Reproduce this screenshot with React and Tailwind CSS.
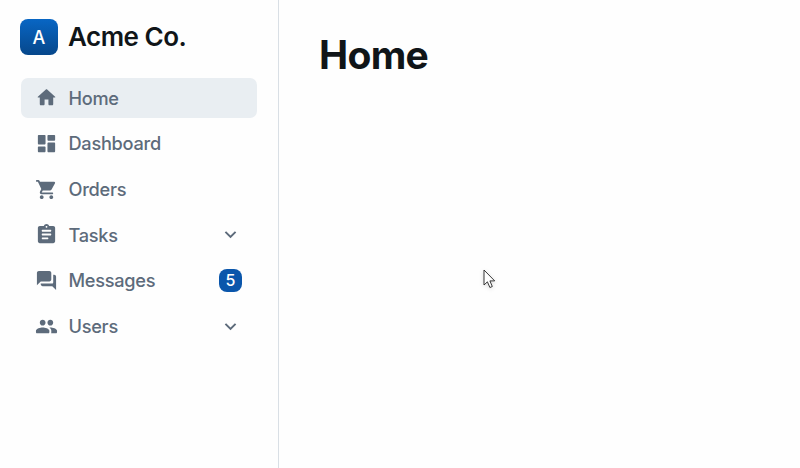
const paths = {
  home: 'M10 19v-5h4v5c0 .55.45 1 1 1h3c.55 0 1-.45 1-1v-7h1.7c.46 0 .68-.57.33-.87L12.67 3.6c-.38-.34-.96-.34-1.34 0l-8.36 7.53c-.34.3-.13.87.33.87H5v7c0 .55.45 1 1 1h3c.55 0 1-.45 1-1z',
  dashboard: 'M4 13h6c.55 0 1-.45 1-1V4c0-.55-.45-1-1-1H4c-.55 0-1 .45-1 1v8c0 .55.45 1 1 1zm0 8h6c.55 0 1-.45 1-1v-4c0-.55-.45-1-1-1H4c-.55 0-1 .45-1 1v4c0 .55.45 1 1 1zm10 0h6c.55 0 1-.45 1-1v-8c0-.55-.45-1-1-1h-6c-.55 0-1 .45-1 1v8c0 .55.45 1 1 1zM13 4v4c0 .55.45 1 1 1h6c.55 0 1-.45 1-1V4c0-.55-.45-1-1-1h-6c-.55 0-1 .45-1 1z',
  cart: 'M7 18c-1.1 0-1.99.9-1.99 2S5.9 22 7 22s2-.9 2-2-.9-2-2-2zM1 3c0 .55.45 1 1 1h1l3.6 7.59-1.35 2.44C4.52 15.37 5.48 17 7 17h11c.55 0 1-.45 1-1s-.45-1-1-1H7l1.1-2h7.45c.75 0 1.41-.41 1.75-1.03l3.58-6.49c.37-.66-.11-1.48-.87-1.48H5.21l-.67-1.43c-.16-.35-.52-.57-.9-.57H2c-.55 0-1 .45-1 1zm16 15c-1.1 0-1.99.9-1.99 2s.89 2 1.99 2 2-.9 2-2-.9-2-2-2z',
  tasks: 'M19 3h-4.18C14.4 1.84 13.3 1 12 1s-2.4.84-2.82 2H5c-1.1 0-2 .9-2 2v14c0 1.1.9 2 2 2h14c1.1 0 2-.9 2-2V5c0-1.1-.9-2-2-2zm-7 0c.55 0 1 .45 1 1s-.45 1-1 1-1-.45-1-1 .45-1 1-1zm1 14H8c-.55 0-1-.45-1-1s.45-1 1-1h5c.55 0 1 .45 1 1s-.45 1-1 1zm3-4H8c-.55 0-1-.45-1-1s.45-1 1-1h8c.55 0 1 .45 1 1s-.45 1-1 1zm0-4H8c-.55 0-1-.45-1-1s.45-1 1-1h8c.55 0 1 .45 1 1s-.45 1-1 1z',
  messages: 'M20 6h-1v8c0 .55-.45 1-1 1H6v1c0 1.1.9 2 2 2h10l4 4V8c0-1.1-.9-2-2-2zm-3 5V4c0-1.1-.9-2-2-2H4c-1.1 0-2 .9-2 2v13l4-4h9c1.1 0 2-.9 2-2z',
  users: 'M16 11c1.66 0 2.99-1.34 2.99-3S17.66 5 16 5c-1.66 0-3 1.34-3 3s1.34 3 3 3zm-8 0c1.66 0 2.99-1.34 2.99-3S9.66 5 8 5C6.34 5 5 6.34 5 8s1.34 3 3 3zm0 2c-2.33 0-7 1.17-7 3.5V18c0 .55.45 1 1 1h12c.55 0 1-.45 1-1v-1.5c0-2.33-4.67-3.5-7-3.5zm8 0c-.29 0-.62.02-.97.05.02.01.03.03.04.04 1.14.83 1.93 1.94 1.93 3.41V18c0 .35-.07.69-.18 1H22c.55 0 1-.45 1-1v-1.5c0-2.33-4.67-3.5-7-3.5z',
  chevron: 'M7.41 8.59 12 13.17l4.59-4.58L18 10l-6 6-6-6 1.41-1.41z',
};

const items = [
  { label: 'Home', icon: 'home', active: true },
  { label: 'Dashboard', icon: 'dashboard' },
  { label: 'Orders', icon: 'cart' },
  { label: 'Tasks', icon: 'tasks', expandable: true },
  { label: 'Messages', icon: 'messages', badge: 5 },
  { label: 'Users', icon: 'users', expandable: true },
];

function Icon({ name }) {
  return (
    <svg viewBox="0 0 24 24" className="size-[23px] shrink-0 fill-current" aria-hidden="true">
      <path d={paths[name]} />
    </svg>
  );
}

function NavItem({ label, icon, active, expandable, badge }) {
  return (
    <li
      className={`flex h-10 items-center rounded-[7px] pr-[15px] pl-[14.4px] text-[#5d6b7b] ${active ? 'bg-[#e9eef2]' : ''}`}
    >
      <Icon name={icon} />
      <span className="ml-[10.1px] flex-1 pb-[0.6px] text-[18.2px] leading-7 font-medium tracking-[-0.27px]">{label}</span>
      {expandable && (
        <span className="flex">
          <Icon name="chevron" />
        </span>
      )}
      {badge && (
        <span className="flex h-[23px] w-[23px] items-center justify-center rounded-lg bg-[#0a56ab] text-base font-medium text-white">
          {badge}
        </span>
      )}
    </li>
  );
}

export default function App() {
  return (
    <div className="flex h-[468px] w-[800px] overflow-hidden bg-[#fefefe] font-['Inter',sans-serif]">
      <aside className="w-[279px] shrink-0 border-r border-[#d9dfe5] px-[21px] pt-[19px]">
        <header className="-ml-px flex items-center gap-[10px]">
          <div className="flex h-9 w-[38px] items-center justify-center rounded-lg bg-linear-to-b from-[#0866c4] to-[#06478b] text-[18px] font-medium text-white">
            A
          </div>
          <span className="text-[26px] leading-9 font-semibold tracking-[-0.5px] text-[#101518]">Acme Co.</span>
        </header>
        <ul className="mt-[22.9px] flex flex-col gap-[5.65px]">
          {items.map((item) => (
            <NavItem key={item.label} {...item} />
          ))}
        </ul>
      </aside>
      <main className="relative flex-1 px-[40px] pt-[31px]">
        <h1 className="text-[39px] leading-[48px] font-bold tracking-[-0.7px] text-[#101518]">Home</h1>
        <svg
          viewBox="0 0 14 22"
          className="absolute top-[269px] left-[204px] h-[22px] w-[14px] drop-shadow-sm"
          aria-hidden="true"
        >
          <path
            d="M1 1v15l3.4-3.2 2.5 5.7 2.4-1-2.4-5.6h4.8z"
            fill="white"
            stroke="#222"
            strokeWidth="0.9"
          />
        </svg>
      </main>
    </div>
  );
}
